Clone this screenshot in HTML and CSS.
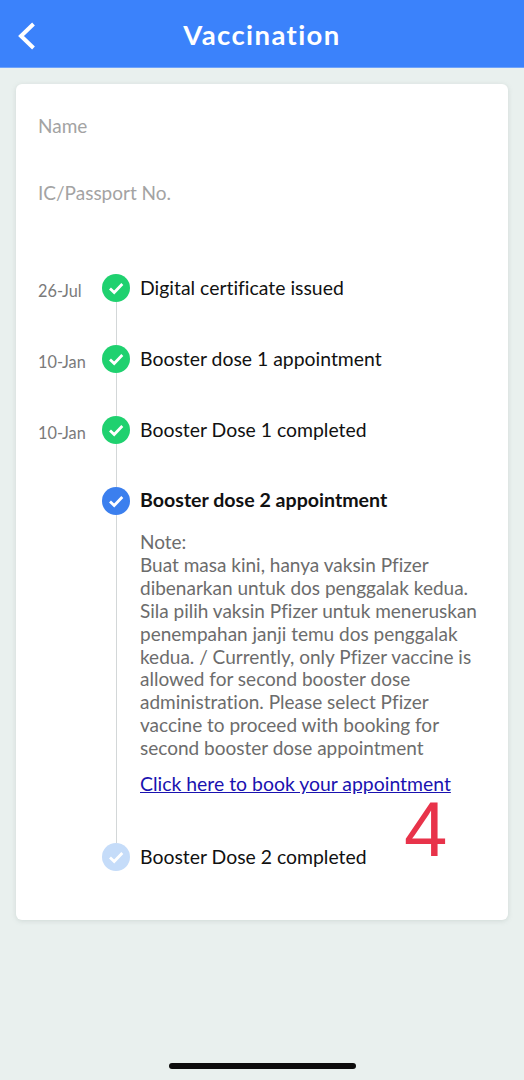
FILE: index.html
```html
<!DOCTYPE html>
<html lang="en">
<head>
<meta charset="utf-8">
<title>Vaccination</title>
<link rel="stylesheet" href="styles.css">
</head>
<body>
<header class="topbar">
  <svg class="back" viewBox="0 0 20 30" aria-hidden="true"><path d="M16.500 3 L4 15 L16.500 27"/></svg>
  <h1 class="title">Vaccination</h1>
</header>
<main class="content">
  <section class="card">
    <div class="field field-name">Name</div>
    <div class="field field-ic">IC/Passport No.</div>
    <ol class="timeline">
      <li class="step">
        <span class="date">26-Jul</span>
        <span class="rail"><svg class="dot green" viewBox="0 0 28 28"><circle cx="14" cy="14" r="14"/><path d="M8 14.500 L12.200 18.500 L20.300 10"/></svg><i class="line"></i></span>
        <div class="body"><p class="label">Digital certificate issued</p></div>
      </li>
      <li class="step">
        <span class="date">10-Jan</span>
        <span class="rail"><svg class="dot green" viewBox="0 0 28 28"><circle cx="14" cy="14" r="14"/><path d="M8 14.500 L12.200 18.500 L20.300 10"/></svg><i class="line"></i></span>
        <div class="body"><p class="label">Booster dose 1 appointment</p></div>
      </li>
      <li class="step">
        <span class="date">10-Jan</span>
        <span class="rail"><svg class="dot green" viewBox="0 0 28 28"><circle cx="14" cy="14" r="14"/><path d="M8 14.500 L12.200 18.500 L20.300 10"/></svg><i class="line"></i></span>
        <div class="body"><p class="label">Booster Dose 1 completed</p></div>
      </li>
      <li class="step step-open">
        <span class="date"></span>
        <span class="rail"><svg class="dot blue" viewBox="0 0 28 28"><circle cx="14" cy="14" r="14"/><path d="M8 14.500 L12.200 18.500 L20.300 10"/></svg><i class="line"></i></span>
        <div class="body">
          <p class="label strong">Booster dose 2 appointment</p>
          <p class="note">Note:<br>Buat masa kini, hanya vaksin Pfizer<br>dibenarkan untuk dos penggalak kedua.<br>Sila pilih vaksin Pfizer untuk meneruskan<br>penempahan janji temu dos penggalak<br>kedua. / Currently, only Pfizer vaccine is<br>allowed for second booster dose<br>administration. Please select Pfizer<br>vaccine to proceed with booking for<br>second booster dose appointment</p>
          <a class="book" href="#">Click here to book your appointment</a>
        </div>
      </li>
      <li class="step step-last">
        <span class="date"></span>
        <span class="rail"><svg class="dot pale" viewBox="0 0 28 28"><circle cx="14" cy="14" r="14"/><path d="M8 14.500 L12.200 18.500 L20.300 10"/></svg></span>
        <div class="body"><p class="label">Booster Dose 2 completed</p></div>
      </li>
    </ol>
    <span class="annot">4</span>
  </section>
</main>
<div class="homebar"></div>
</body>
</html>
```

FILE: styles.css
```css
* { box-sizing: border-box; }
html, body { height: 100%; }
body {
  margin: 0;
  height: 1080px;
  display: flex;
  flex-direction: column;
  background: #e9f0ee;
  font-family: Lato, "Noto Sans", sans-serif;
  font-variant-ligatures: none;
  color: #111;
  overflow: hidden;
}
.topbar {
  height: 68px;
  flex: none;
  background: #3b82fb;
  border-bottom: 1px solid #6ea3fb;
  display: flex;
  align-items: center;
  justify-content: center;
  position: relative;
}
.back {
  position: absolute;
  left: 17px;
  top: 21px;
  width: 20px;
  height: 30px;
  fill: none;
  stroke: #fff;
  stroke-width: 4;
}
.title {
  margin: 2px 0 0;
  font-size: 27.500px;
  font-weight: 700;
  letter-spacing: 1.400px;
  color: #fff;
}
.content {
  flex: 1;
  padding: 16px 16px 0;
}
.card {
  position: relative;
  height: 836px;
  background: #fff;
  border-radius: 6px;
  box-shadow: 0 1px 5px rgba(120, 135, 130, .22);
  padding: 31px 0 0 22px;
}
.field {
  font-size: 19px;
  line-height: 22px;
  color: #a3a3a3;
}
.field-ic { margin-top: 45px; }
.timeline {
  list-style: none;
  margin: 70px 0 0;
  padding: 0;
}
.step {
  display: flex;
  height: 71px;
}
.step-open { height: 356px; }
.step-last { height: 28px; }
.date {
  width: 64px;
  flex: none;
  padding-top: 7px;
  font-size: 16.300px;
  line-height: 20px;
  color: #7a7a7a;
}
.rail {
  width: 28px;
  flex: none;
  display: flex;
  flex-direction: column;
  align-items: center;
}
.dot {
  width: 28px;
  height: 28px;
  flex: none;
}
.dot path {
  fill: none;
  stroke: #fff;
  stroke-width: 2.800;
}
.green circle { fill: #1fd16f; }
.blue circle { fill: #3b7fee; }
.pale circle { fill: #c5dcf9; }
.line {
  flex: 1;
  width: 1px;
  background: #d3d7d8;
}
.body {
  margin-left: 10px;
}
.label {
  margin: 0;
  font-size: 19.400px;
  line-height: 28px;
  color: #111;
}
.strong {
  font-size: 19.600px;
  font-weight: 700;
  line-height: 26px;
}
.note {
  margin: 18px 0 0;
  font-size: 19px;
  line-height: 22.900px;
  color: #6c6c6c;
}
.book {
  display: block;
  margin-top: 11px;
  font-size: 19.400px;
  line-height: 26px;
  color: #1a12b0;
  text-decoration: underline;
}
.annot {
  position: absolute;
  left: 388px;
  top: 717px;
  font-family: "Liberation Sans", sans-serif;
  font-size: 78px;
  line-height: 56px;
  color: #e8334a;
}
.homebar {
  flex: none;
  align-self: center;
  width: 187px;
  height: 6px;
  margin-bottom: 11px;
  border-radius: 3px;
  background: #0c0c0c;
}
```
